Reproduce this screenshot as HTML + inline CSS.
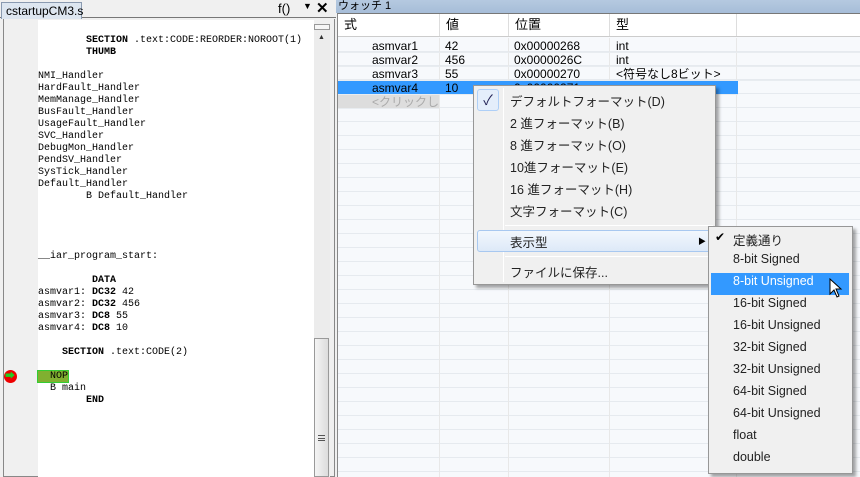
<!DOCTYPE html><html><head><meta charset="utf-8"><style>
*{margin:0;padding:0;box-sizing:border-box}
body{width:860px;height:477px;overflow:hidden;background:#f0f0f0;position:relative;font-family:"Liberation Sans","Noto Sans CJK JP",sans-serif;font-size:12px;color:#000}
.a{position:absolute;white-space:nowrap}
.code{font-family:"Liberation Mono","Noto Sans CJK JP",monospace;font-size:10px;line-height:12px;white-space:pre;}
.code b{font-weight:bold}
.mi{position:absolute;left:36px;font-size:12.5px;color:#222;white-space:nowrap}
.si{position:absolute;left:24px;font-size:12.5px;color:#222;white-space:nowrap}
.row{position:absolute;left:0;width:522px;height:14px;font-size:12px;line-height:14px;border-bottom:1px solid #e8ecf0;white-space:nowrap;overflow:hidden}
.row span{position:absolute}
</style></head><body>
<div class="a" style="left:0;top:0;width:336px;height:18px;background:#f0f0f0;border-bottom:1px solid #777"></div>
<div class="a" style="left:1px;top:2px;width:81px;height:17px;background:#dde6f0;border:1px solid #8a9ab0;border-bottom:none;font-size:12px;line-height:16px;padding-left:4px">cstartupCM3.s</div>
<div class="a" style="left:278px;top:1px;font-size:13px">f()</div>
<div class="a" style="left:303px;top:1px;font-size:9px">▼</div>
<div class="a" style="left:316px;top:-1px;font-size:15px;font-weight:bold">✕</div>
<div class="a" style="left:3px;top:19px;width:332px;height:458px;border:1px solid #888;border-top:none;background:#f0f0f0"></div>
<div class="a" style="left:38px;top:20px;width:276px;height:457px;background:#fff"></div>
<div class="a" style="left:314px;top:24px;width:16px;height:453px;background:#ececec"></div>
<div class="a" style="left:314px;top:24px;width:16px;height:6px;border:1px solid #999;background:#f6f6f6"></div>
<div class="a" style="left:318px;top:34px;font-size:7px;color:#333">▲</div>
<div class="a" style="left:314px;top:338px;width:15px;height:139px;border:1px solid #999;background:linear-gradient(90deg,#f4f4f4,#dcdcdc)"></div>
<div class="a" style="left:318px;top:435px;width:7px;height:6px;border-top:1px solid #555;border-bottom:1px solid #555"></div>
<div class="a" style="left:318px;top:438px;width:7px;height:1px;background:#555"></div>
<div class="a code" style="left:38px;top:35px">        <b>SECTION</b> .text:CODE:REORDER:NOROOT(1)
        <b>THUMB</b>

NMI_Handler
HardFault_Handler
MemManage_Handler
BusFault_Handler
UsageFault_Handler
SVC_Handler
DebugMon_Handler
PendSV_Handler
SysTick_Handler
Default_Handler
        B Default_Handler




__iar_program_start:

         <b>DATA</b>
asmvar1: <b>DC32</b> 42
asmvar2: <b>DC32</b> 456
asmvar3: <b>DC8</b> 55
asmvar4: <b>DC8</b> 10

    <b>SECTION</b> .text:CODE(2)

<span style="background:#80b030;outline:1px solid #3c3">  NOP</span>
  B main
        <b>END</b></div>
<div class="a" style="left:4px;top:370px;width:13px;height:13px;border-radius:50%;background:#e00"></div>
<div class="a" style="left:5px;top:371px;font-size:10px;color:#2c2;line-height:11px">➡</div>
<div class="a" style="left:336px;top:0;width:524px;height:13px;background:linear-gradient(#b5c9e0,#a6bdd8);font-size:11px;line-height:12px;padding-left:2px">ウォッチ 1</div>
<div class="a" style="left:337px;top:13px;width:523px;height:464px;background:#f7f9fc;border-left:1px solid #888;border-top:1px solid #777"></div>
<div class="a" style="left:338px;top:14px;width:522px;height:23px;background:#fff;border-bottom:1px solid #ccc;font-size:13px;line-height:22px">
<span class="a" style="left:6px">式</span><span class="a" style="left:108px">値</span><span class="a" style="left:177px">位置</span><span class="a" style="left:278px">型</span>
<span class="a" style="left:101px;top:0;width:1px;height:22px;background:#ddd"></span><span class="a" style="left:170px;top:0;width:1px;height:22px;background:#ddd"></span><span class="a" style="left:271px;top:0;width:1px;height:22px;background:#ddd"></span><span class="a" style="left:398px;top:0;width:1px;height:22px;background:#ddd"></span></div>
<div class="a" style="left:338px;top:38px;width:522px;height:439px;background-image:repeating-linear-gradient(#f7f9fc 0 13px,#e6eaef 13px 14px)">
<div class="a" style="left:101px;top:0;width:1px;height:439px;background:#e8e8e8"></div>
<div class="a" style="left:170px;top:0;width:1px;height:439px;background:#e8e8e8"></div>
<div class="a" style="left:271px;top:0;width:1px;height:439px;background:#e8e8e8"></div>
<div class="a" style="left:398px;top:0;width:1px;height:439px;background:#e8e8e8"></div>
<div class="row" style="top:1px"><span style="left:34px">asmvar1</span><span style="left:107px">42</span><span style="left:176px">0x00000268</span><span style="left:278px">int</span></div>
<div class="row" style="top:15px"><span style="left:34px">asmvar2</span><span style="left:107px">456</span><span style="left:176px">0x0000026C</span><span style="left:278px">int</span></div>
<div class="row" style="top:29px"><span style="left:34px">asmvar3</span><span style="left:107px">55</span><span style="left:176px">0x00000270</span><span style="left:278px">&lt;符号なし8ビット&gt;</span></div>
<div class="row" style="top:43px;width:400px;background:#3399ff"><span style="left:34px">asmvar4</span><span style="left:107px">10</span><span style="left:176px">0x00000271</span></div>
<div class="row" style="top:57px;width:101px;background:#ddd;color:#aaa"><span style="left:34px">&lt;クリックし...</span></div>
</div>
<div class="a" style="left:473px;top:85px;width:243px;height:200px;background:#f0f0f0;border:1px solid #979797;box-shadow:3px 3px 3px rgba(0,0,0,.35)">
<div class="a" style="left:29px;top:2px;width:1px;height:194px;background:#e2e3e3;border-right:1px solid #fff"></div>
<div class="a" style="left:3px;top:3px;width:22px;height:22px;border:1px solid #aecff7;background:#e4eefb;border-radius:3px;color:#225;text-align:center;line-height:20px;font-size:14px">✓</div>
<div class="mi" style="top:5px">デフォルトフォーマット(D)</div>
<div class="mi" style="top:27px">2 進フォーマット(B)</div>
<div class="mi" style="top:49px">8 進フォーマット(O)</div>
<div class="mi" style="top:71px">10進フォーマット(E)</div>
<div class="mi" style="top:93px">16 進フォーマット(H)</div>
<div class="mi" style="top:115px">文字フォーマット(C)</div>
<div class="a" style="left:31px;top:139px;width:208px;height:1px;background:#e0e0e0;border-bottom:1px solid #fff"></div>
<div class="a" style="left:3px;top:144px;width:234px;height:22px;border:1px solid #a8c8f0;border-radius:3px;background:linear-gradient(#f2f7fd,#dde9f8)"></div>
<div class="mi" style="top:146px">表示型</div>
<div class="a" style="left:224px;top:150px;font-size:8px">▶</div>
<div class="a" style="left:31px;top:170px;width:208px;height:1px;background:#e0e0e0;border-bottom:1px solid #fff"></div>
<div class="mi" style="top:176px">ファイルに保存...</div>
</div>
<div class="a" style="left:708px;top:226px;width:145px;height:248px;background:#f0f0f0;border:1px solid #979797;box-shadow:3px 3px 3px rgba(0,0,0,.35)">
<div class="a" style="left:2px;top:46px;width:138px;height:22px;background:#3399ff"></div>
<div class="a" style="left:6px;top:3px;font-size:12px">✔</div>
<div class="si" style="top:3px">定義通り</div>
<div class="si" style="top:25px">8-bit Signed</div>
<div class="si" style="top:47px;color:#fff">8-bit Unsigned</div>
<div class="si" style="top:69px">16-bit Signed</div>
<div class="si" style="top:91px">16-bit Unsigned</div>
<div class="si" style="top:113px">32-bit Signed</div>
<div class="si" style="top:135px">32-bit Unsigned</div>
<div class="si" style="top:157px">64-bit Signed</div>
<div class="si" style="top:179px">64-bit Unsigned</div>
<div class="si" style="top:201px">float</div>
<div class="si" style="top:223px">double</div>
</div>
<svg class="a" style="left:829px;top:278px" width="14" height="22" viewBox="0 0 14 22"><path d="M1 1 L1 16 L5 12 L8 19 L10 18 L7 11 L12 11 Z" fill="#fff" stroke="#000" stroke-width="1"/></svg>
</body></html>
